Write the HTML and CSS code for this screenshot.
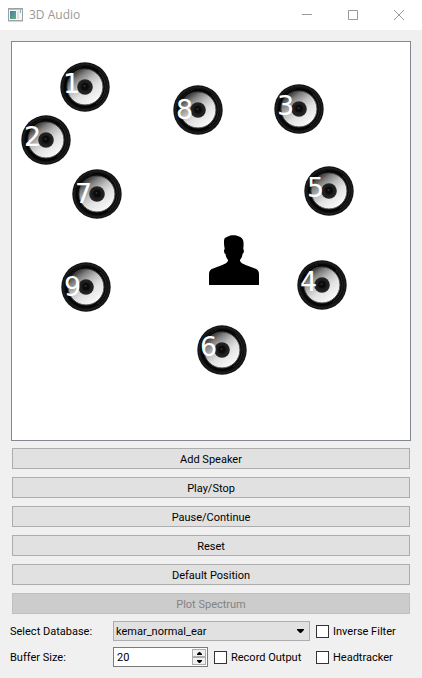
FILE: index.html
```html
<!DOCTYPE html>
<html lang="en">
<head>
<meta charset="utf-8">
<title>3D Audio</title>
<link rel="stylesheet" href="styles.css">
</head>
<body>
<svg class="defs" aria-hidden="true">
  <defs>
    <linearGradient id="cone" x1="0.1" y1="0.15" x2="0.7" y2="0.95">
      <stop offset="0" stop-color="#2c2c2c"/>
      <stop offset="0.2" stop-color="#808080"/>
      <stop offset="0.42" stop-color="#bcbcbc"/>
      <stop offset="0.65" stop-color="#e2e2e2"/>
      <stop offset="1" stop-color="#f8f8f8"/>
    </linearGradient>
    <radialGradient id="cap" cx="0.5" cy="0.48" r="0.5">
      <stop offset="0" stop-color="#3c3c3c"/>
      <stop offset="0.25" stop-color="#0a0a0a"/>
      <stop offset="0.6" stop-color="#1c1c1c"/>
      <stop offset="1" stop-color="#262626"/>
    </radialGradient>
    <symbol id="driver" viewBox="0 0 50 50">
      <circle cx="25" cy="25" r="24.700" fill="#121212"/>
      <circle cx="25" cy="25" r="23" fill="none" stroke="#222" stroke-width="1"/>
      <circle cx="25" cy="25" r="21" fill="#050505"/>
      <path d="M39 10a20.500 20.500 0 0 1-3 32" fill="none" stroke="#2c2c2c" stroke-width="1"/>
      <path d="M9 14a20 20 0 0 1 12-9" fill="none" stroke="#333" stroke-width="1" stroke-dasharray="1 1"/>
      <circle cx="25" cy="25" r="18" fill="url(#cone)" stroke="#444" stroke-width="1"/>
      <circle cx="25" cy="25" r="7.800" fill="url(#cap)"/>
      <circle cx="25" cy="24.500" r="3.500" fill="#0b0b0b"/>
      <circle cx="24.500" cy="24" r="1" fill="#333"/>
    </symbol>
  </defs>
</svg>
<div class="window">
  <header class="titlebar">
    <svg class="app-icon" viewBox="0 0 15 14" aria-hidden="true">
      <defs>
        <linearGradient id="screen" x1="0" y1="0" x2="1" y2="1">
          <stop offset="0" stop-color="#4a78a8"/>
          <stop offset="1" stop-color="#5cb878"/>
        </linearGradient>
      </defs>
      <rect x=".5" y=".5" width="14" height="12" fill="#f4f6f8" stroke="#9aa0a8"/>
      <path d="M1 1.500h13" stroke="#b4bfcc"/>
      <path d="M0 13h15" stroke="#a8a8a8"/>
      <rect x="2" y="3" width="6" height="8" fill="url(#screen)"/>
      <rect x="9" y="3" width="2" height="8" fill="#dde0e3"/>
      <rect x="12" y="2" width="1" height="3" fill="#7ab59a"/>
    </svg>
    <h1 class="title">3D Audio</h1>
    <button class="caption" aria-label="Minimize"><svg viewBox="0 0 10 10"><path d="M0 4.500h10"/></svg></button>
    <button class="caption" aria-label="Maximize"><svg viewBox="0 0 10 10"><path d="M.5.500h9v9h-9z"/></svg></button>
    <button class="caption" aria-label="Close"><svg viewBox="0 0 10 10"><path d="M0 0l10 10M10 0L0 10"/></svg></button>
  </header>
  <main class="content">
    <div class="stage">
      <div class="speaker s1"><svg><use href="#driver"/></svg><span>1</span></div>
      <div class="speaker s2"><svg><use href="#driver"/></svg><span>2</span></div>
      <div class="speaker s3"><svg><use href="#driver"/></svg><span>3</span></div>
      <div class="speaker s4"><svg><use href="#driver"/></svg><span>4</span></div>
      <div class="speaker s5"><svg><use href="#driver"/></svg><span>5</span></div>
      <div class="speaker s6"><svg><use href="#driver"/></svg><span>6</span></div>
      <div class="speaker low s7"><svg><use href="#driver"/></svg><span>7</span></div>
      <div class="speaker low s8"><svg><use href="#driver"/></svg><span>8</span></div>
      <div class="speaker low s9"><svg><use href="#driver"/></svg><span>9</span></div>
      <svg class="listener" viewBox="0 0 50 50" aria-hidden="true">
        <path d="M0 50V39C0 36 1.500 34.500 4 33.500L12 30.500C16 29 19 27.500 19 25C17.500 23 16.800 21.500 16.500 19C15.300 18.500 15 17 15 15.500C15.200 14.500 15.500 14.500 15.700 14C15 10 14.500 6 15.500 3.500C16.500 2 18 2 19 1.500C21 0.300 25 0 28 0.800C31 1.500 33 3 34 5C35 8 34.500 11 34.300 14C35.200 15 35.300 18 33.500 19C33.300 21.500 32.500 23 31 25C31 27.500 34 29 38 30.500L46 33.500C48.500 34.500 50 36 50 39V50Z"/>
      </svg>
    </div>
    <div class="actions">
      <button>Add Speaker</button>
      <button>Play/Stop</button>
      <button>Pause/Continue</button>
      <button>Reset</button>
      <button>Default Position</button>
      <button disabled>Plot Spectrum</button>
    </div>
    <form class="settings">
      <label for="database">Select Database:</label>
      <div class="combo">
        <select id="database"><option>kemar_normal_ear</option></select>
        <svg class="arrow" viewBox="0 0 7 4" aria-hidden="true"><path d="M0 0h7v1L4 4H3L0 1z"/></svg>
      </div>
      <label class="check"><input type="checkbox"><span>Inverse Filter</span></label>
      <label for="buffer">Buffer Size:</label>
      <div class="buffer">
        <div class="spin">
          <input id="buffer" type="text" value="20">
          <div class="steps">
            <button type="button" aria-label="Increase"><svg viewBox="0 0 5 3"><path d="M2 0h1l2 2v1H0V2z"/></svg></button>
            <button type="button" aria-label="Decrease"><svg viewBox="0 0 5 3"><path d="M0 0h5v1L3 3H2L0 1z"/></svg></button>
          </div>
        </div>
        <label class="check"><input type="checkbox"><span>Record Output</span></label>
      </div>
      <label class="check"><input type="checkbox"><span>Headtracker</span></label>
    </form>
  </main>
</div>
</body>
</html>
```
FILE: styles.css
```css
* { box-sizing: border-box; }

body {
  margin: 0;
  background: #f0f0f0;
  color: #000;
  font: 11px/14px Roboto, "Noto Sans", sans-serif;
}

button, input, select { font: inherit; color: inherit; margin: 0; }

svg { display: block; }

.defs { position: absolute; width: 0; height: 0; }

.titlebar {
  display: flex;
  align-items: center;
  height: 30px;
  padding-left: 8px;
  background: #fff;
}

.app-icon { width: 15px; height: 14px; }

.title {
  flex: 1;
  margin: 0 0 0 6px;
  color: #999;
  font: 12px/16px "Open Sans", "Noto Sans", sans-serif;
}

.caption {
  display: grid;
  place-items: center;
  width: 46px;
  height: 30px;
  padding: 0;
  border: 0;
  background: none;
}

.caption svg {
  width: 10px;
  height: 10px;
  fill: none;
  stroke: #999;
}

.content { padding: 11px 11px 10px; }

.stage {
  position: relative;
  aspect-ratio: 1;
  border: 1px solid #828790;
  background: #fff;
}

.speaker {
  position: absolute;
  width: 50px;
  height: 50px;
}

.speaker svg { width: 50px; height: 50px; }

.speaker span {
  position: absolute;
  left: 3px;
  top: 7px;
  color: #fff;
  font: 27px/30px "DejaVu Sans", sans-serif;
}

.speaker.low span { top: 10px; }

.s1 { left: 48px; top: 20px; }
.s2 { left: 9px; top: 73px; }
.s3 { left: 262px; top: 42px; }
.s4 { left: 285px; top: 218px; }
.s5 { left: 292px; top: 124px; }
.s6 { left: 185px; top: 283px; }
.s7 { left: 60px; top: 127px; }
.s8 { left: 161px; top: 43px; }
.s9 { left: 49px; top: 220px; }

.listener {
  position: absolute;
  left: 197px;
  top: 193px;
  width: 50px;
  height: 50px;
}

.actions {
  display: grid;
  gap: 8px;
  padding: 7px 1px;
}

.actions button {
  height: 21px;
  padding: 2px 0 0;
  border: 1px solid #adadad;
  background: #e1e1e1;
}

.actions button:disabled {
  border-color: #bfbfbf;
  background: #ccc;
  color: #838383;
}

.settings {
  display: grid;
  grid-template-columns: 102px 1fr 95px;
  row-gap: 6px;
  align-items: center;
}

.settings > label:not(.check) {
  margin-left: -1px;
  padding-top: 2px;
}

.combo {
  position: relative;
  margin-right: 6px;
}

.combo select {
  display: block;
  width: 100%;
  height: 20px;
  padding: 2px 2px 0;
  border: 1px solid #adadad;
  border-radius: 0;
  background: #e1e1e1;
  appearance: none;
}

.arrow {
  position: absolute;
  right: 6px;
  top: 8px;
  width: 7px;
  height: 4px;
  pointer-events: none;
}

.check {
  display: flex;
  align-items: center;
  gap: 4px;
  white-space: nowrap;
}

.check span { padding-top: 2px; }

.check input {
  width: 13px;
  height: 13px;
  border: 1px solid #333;
  background: #fff;
  appearance: none;
}

.buffer {
  display: flex;
  align-items: center;
  gap: 6px;
}

.spin {
  display: flex;
  width: 95px;
  height: 20px;
  padding: 1px;
  border: 1px solid #7a7a7a;
  background: #fff;
}

.spin input {
  flex: 1;
  min-width: 0;
  padding: 2px 2px 0;
  border: 0;
  background: none;
}

.steps {
  display: grid;
  grid-template-rows: 1fr 1fr;
  width: 14px;
}

.steps button {
  display: grid;
  place-items: center;
  padding: 0;
  border: 1px solid #adadad;
  background: #f0f0f0;
}

.steps svg { width: 5px; height: 3px; }
```
